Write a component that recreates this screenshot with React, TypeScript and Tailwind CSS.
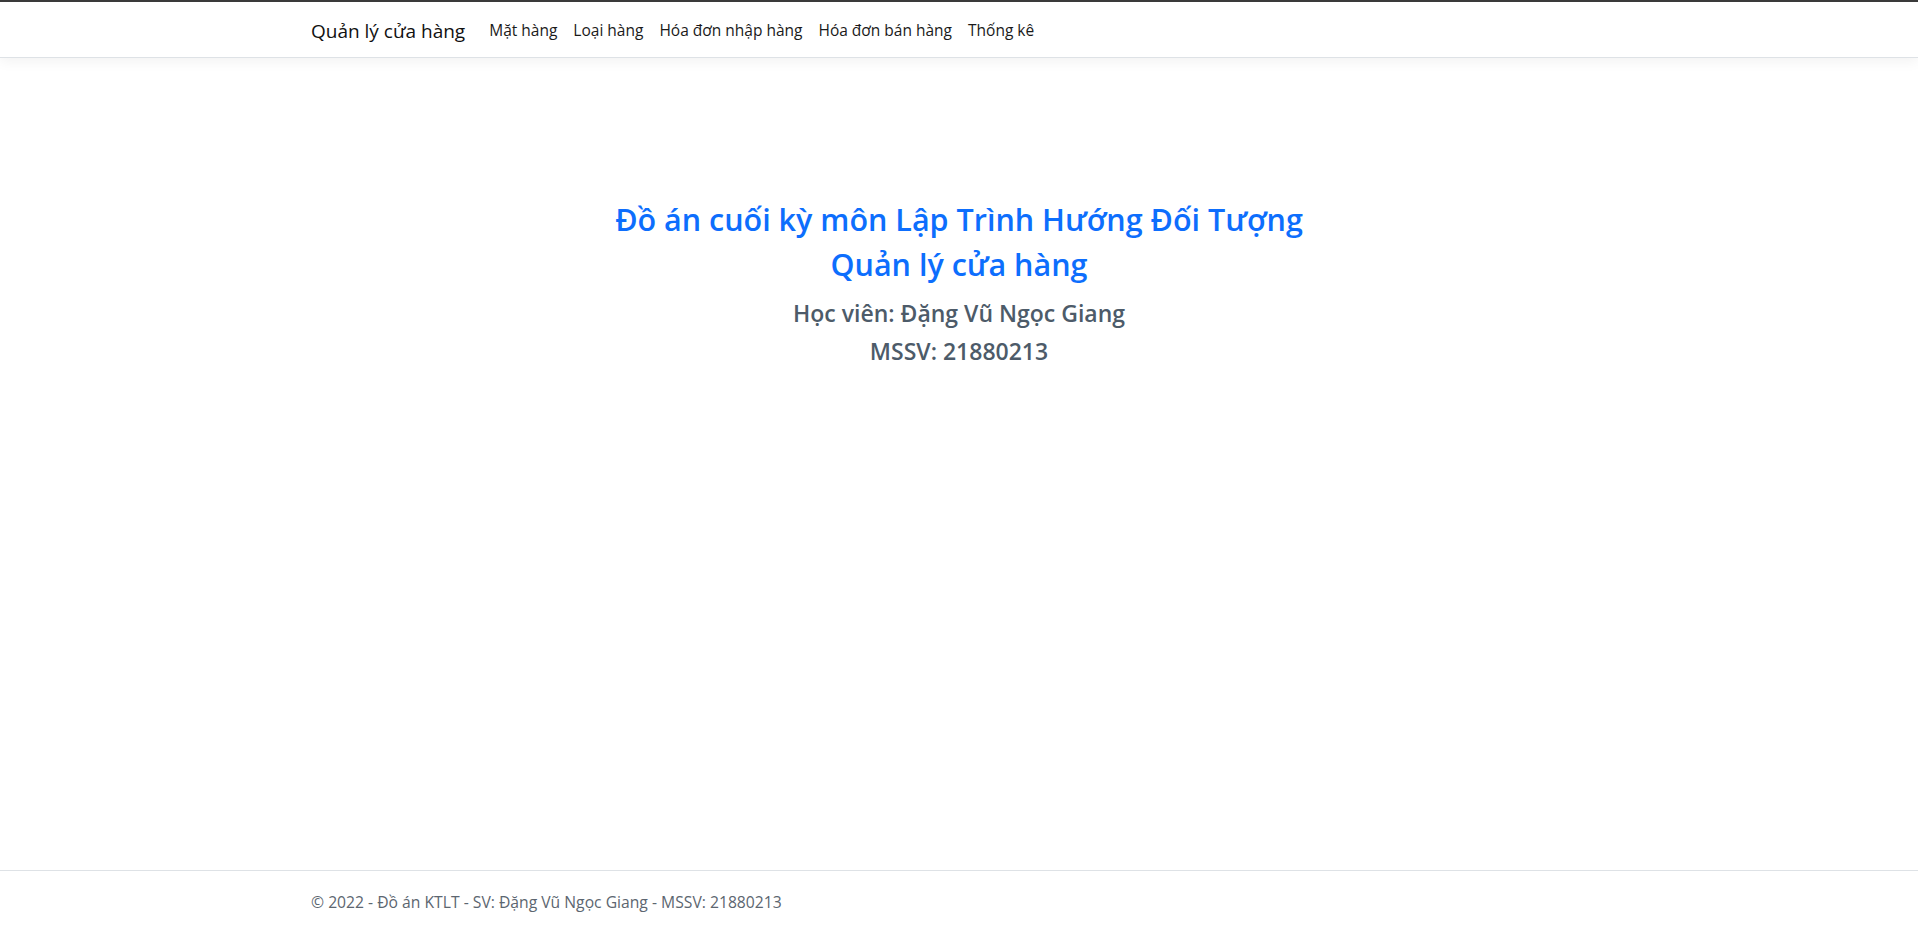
export default function App() {
  const links = ["Mặt hàng", "Loại hàng", "Hóa đơn nhập hàng", "Hóa đơn bán hàng", "Thống kê"];
  return (
    <div className="flex min-h-[930px] flex-col bg-white font-['Open_Sans','Noto_Sans',sans-serif] text-[#212529]">
      <header className="border-t-2 border-t-[#3a3a3a] border-b border-b-[#dee2e6] bg-white shadow-[0_4px_12px_rgba(0,0,0,0.05)]">
        <nav className="mx-auto flex h-[55px] w-[1320px] items-center px-3 pt-[3px]">
          <span className="mr-[16px] text-[19px] text-[#111]">Quản lý cửa hàng</span>
          <div className="flex items-center">
            {links.map((l) => (
              <a key={l} className="px-[8px] text-[15.5px] text-[#1a1a1a]">
                {l}
              </a>
            ))}
          </div>
        </nav>
      </header>

      <main className="flex-1">
        <div className="mx-auto flex w-[1320px] flex-col items-center px-3 pt-[143px] text-center">
          <h2 className="mb-2 text-[30.5px] leading-[37px] font-semibold text-[#0d6efd]">
            Đồ án cuối kỳ môn Lập Trình Hướng Đối Tượng
          </h2>
          <h2 className="mb-[15px] text-[30.5px] leading-[37px] font-semibold text-[#0d6efd]">Quản lý cửa hàng</h2>
          <h4 className="mb-2 text-[23px] leading-[30px] font-semibold text-[#4d5b69]">
            Học viên: Đặng Vũ Ngọc Giang
          </h4>
          <h4 className="text-[23px] leading-[30px] font-semibold text-[#4d5b69]">MSSV: 21880213</h4>
        </div>
      </main>

      <footer className="h-[60px] border-t border-t-[#dee2e6]">
        <div className="mx-auto flex h-full w-[1320px] items-center px-3 pt-[4px] text-[15.7px] text-[#5c6670]">
          © 2022 - Đồ án KTLT - SV: Đặng Vũ Ngọc Giang - MSSV: 21880213
        </div>
      </footer>
    </div>
  );
}
